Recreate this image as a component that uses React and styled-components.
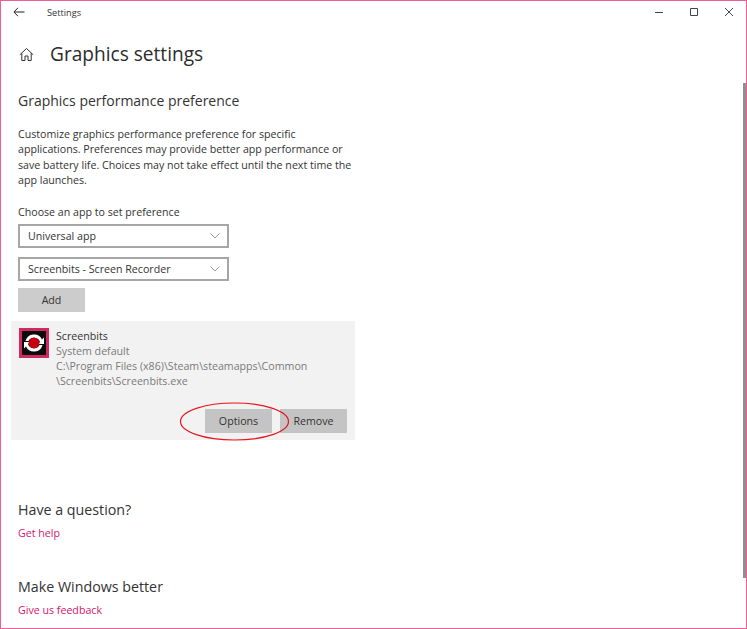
import styled, { createGlobalStyle } from "styled-components";

const GlobalStyle = createGlobalStyle`
  html, body {
    margin: 0;
    padding: 0;
    background: #fff;
  }
  * {
    box-sizing: border-box;
  }
`;

const Window = styled.div`
  position: relative;
  width: 747px;
  height: 629px;
  overflow: hidden;
  background: #fff;
  border: 1px solid #ee5f9a;
  font-family: "Open Sans", "Noto Sans", sans-serif;
  color: #1f1f1f;
`;

const TitleBar = styled.header`
  display: flex;
  align-items: center;
  height: 22px;
  padding-left: 12px;
`;

const BackButton = styled.div`
  display: flex;
  width: 12px;
`;

const TitleText = styled.span`
  margin-left: 22px;
  font-size: 9.2px;
  color: #333;
`;

const WindowControls = styled.div`
  display: flex;
  align-items: center;
  gap: 25px;
  margin-left: auto;
  margin-right: 12px;
`;

const ControlIcon = styled.svg`
  display: block;
  width: 10px;
  height: 10px;
`;

const Content = styled.main`
  padding: 0 0 0 17px;
`;

const PageHeader = styled.div`
  display: flex;
  align-items: center;
  height: 36px;
  margin-top: 13px;
`;

const HomeIcon = styled.svg`
  display: block;
  width: 15px;
  height: 15px;
  margin-left: 1px;
`;

const PageTitle = styled.h1`
  margin: 0 0 0 16px;
  font-size: 19.1px;
  font-weight: 400;
  color: #2c2c2c;
`;

const SectionTitle = styled.h2`
  margin: ${(props) => props.$top}px 0 0 0;
  font-size: ${(props) => props.$size || 14}px;
  line-height: 20px;
  font-weight: 400;
  color: #333;
`;

const Description = styled.p`
  width: 338px;
  margin: 16px 0 0 0;
  font-size: 10.65px;
  line-height: 15.3px;
  color: #333;
`;

const FieldLabel = styled.div`
  margin-top: 17px;
  font-size: 10.65px;
  line-height: 15px;
  color: #333;
`;

const SelectBox = styled.div`
  display: flex;
  align-items: center;
  justify-content: space-between;
  width: 211px;
  height: 24px;
  margin-top: ${(props) => props.$top}px;
  padding: 0 7px 0 8px;
  border: 2px solid #a6a6a6;
  background: #fff;
  font-size: 10.65px;
  color: #333;
`;

const Chevron = styled.svg`
  display: block;
  width: 10px;
  height: 6px;
`;

const GrayButton = styled.div`
  display: flex;
  align-items: center;
  justify-content: center;
  width: ${(props) => props.$width}px;
  height: 24px;
  background: #cccccc;
  font-size: 10.65px;
  color: #333;
`;

const AddRow = styled.div`
  margin-top: 7px;
`;

const AppCard = styled.section`
  display: flex;
  flex-direction: column;
  width: 344px;
  height: 119px;
  margin: 9px 0 0 -7px;
  padding: 7px 8px 7px 8px;
  background: #f2f2f2;
`;

const AppRow = styled.div`
  display: flex;
  gap: 7px;
`;

const AppLogo = styled.svg`
  display: block;
  flex-shrink: 0;
  width: 30px;
  height: 30px;
`;

const AppInfo = styled.div`
  margin-top: 1px;
  font-size: 10.65px;
  line-height: 15px;
  color: #7a7a7a;
`;

const AppName = styled.div`
  color: #333;
`;

const CardActions = styled.div`
  display: flex;
  justify-content: flex-end;
  gap: 8px;
  margin-top: auto;
`;

const CardButton = styled(GrayButton)`
  background: #c4c4c4;
`;

const HelpLink = styled.a`
  display: block;
  margin-top: ${(props) => props.$top}px;
  font-size: 10.65px;
  line-height: 15px;
  color: #d6156c;
`;

const Annotation = styled.svg`
  position: absolute;
  left: 178px;
  top: 401px;
  width: 112px;
  height: 40px;
`;

const Scrollbar = styled.div`
  position: absolute;
  right: 0;
  top: 82px;
  width: 3px;
  height: 495px;
  background: #8f8f8f;
`;

export default function App() {
  return (
    <>
      <GlobalStyle />
      <Window>
        <TitleBar>
          <BackButton>
            <svg width="12" height="10" viewBox="0 0 12 10" fill="none" stroke="#222" strokeWidth="1">
              <path d="M11.5 5H1M5 .8 .9 5 5 9.2" />
            </svg>
          </BackButton>
          <TitleText>Settings</TitleText>
          <WindowControls>
            <ControlIcon viewBox="0 0 10 10" stroke="#444" fill="none">
              <path d="M1 5.5H9" />
            </ControlIcon>
            <ControlIcon viewBox="0 0 10 10" stroke="#444" fill="none">
              <path d="M1.5 1.5H8.5V8.5H1.5Z" />
            </ControlIcon>
            <ControlIcon viewBox="0 0 10 10" stroke="#444" fill="none">
              <path d="M1 1 9 9M9 1 1 9" />
            </ControlIcon>
          </WindowControls>
        </TitleBar>

        <Content>
          <PageHeader>
            <HomeIcon viewBox="0 0 15 15" fill="none" stroke="#333" strokeWidth="1">
              <path d="M.8 7.8 7.5 1.5l6.7 6.3M2.8 6.2V13.5H6V9h3v4.5h3.2V6.2" />
            </HomeIcon>
            <PageTitle>Graphics settings</PageTitle>
          </PageHeader>

          <SectionTitle $top={19}>Graphics performance preference</SectionTitle>
          <Description>
            Customize graphics performance preference for specific applications. Preferences may
            provide better app performance or save battery life. Choices may not take effect until
            the next time the app launches.
          </Description>

          <FieldLabel>Choose an app to set preference</FieldLabel>
          <SelectBox $top={4}>
            Universal app
            <Chevron viewBox="0 0 10 6" fill="none" stroke="#999">
              <path d="M.5 .5 5 5 9.5 .5" />
            </Chevron>
          </SelectBox>
          <SelectBox $top={9}>
            Screenbits - Screen Recorder
            <Chevron viewBox="0 0 10 6" fill="none" stroke="#999">
              <path d="M.5 .5 5 5 9.5 .5" />
            </Chevron>
          </SelectBox>
          <AddRow>
            <GrayButton $width={67}>Add</GrayButton>
          </AddRow>

          <AppCard>
            <AppRow>
              <AppLogo viewBox="0 0 30 30">
                <rect width="30" height="30" fill="#cf2a62" />
                <rect x="3" y="3" width="24" height="24" fill="#0b0b0b" />
                <path d="M6.5 13A8.8 8.8 0 0 1 23 11.5L25 9.5V16H19l2-2A6.3 6.3 0 0 0 9.5 13Z" fill="#fff" />
                <path d="M23.5 17A8.8 8.8 0 0 1 7 18.5L5 20.5V14H11l-2 2A6.3 6.3 0 0 0 20.5 17Z" fill="#fff" />
                <circle cx="15" cy="15" r="5.4" fill="#c8000f" />
              </AppLogo>
              <AppInfo>
                <AppName>Screenbits</AppName>
                System default
                <br />
                C:\Program Files (x86)\Steam\steamapps\Common
                <br />
                \Screenbits\Screenbits.exe
              </AppInfo>
            </AppRow>
            <CardActions>
              <CardButton $width={67}>Options</CardButton>
              <CardButton $width={67}>Remove</CardButton>
            </CardActions>
          </AppCard>

          <SectionTitle $top={60} $size={14.25}>Have a question?</SectionTitle>
          <HelpLink $top={6}>Get help</HelpLink>
          <SectionTitle $top={36} $size={14.25}>Make Windows better</SectionTitle>
          <HelpLink $top={6}>Give us feedback</HelpLink>
        </Content>

        <Annotation viewBox="0 0 112 40" fill="none" stroke="#e8141c" strokeWidth="1.2">
          <ellipse cx="55.5" cy="19.5" rx="54" ry="18.5" />
        </Annotation>
        <Scrollbar />
      </Window>
    </>
  );
}
